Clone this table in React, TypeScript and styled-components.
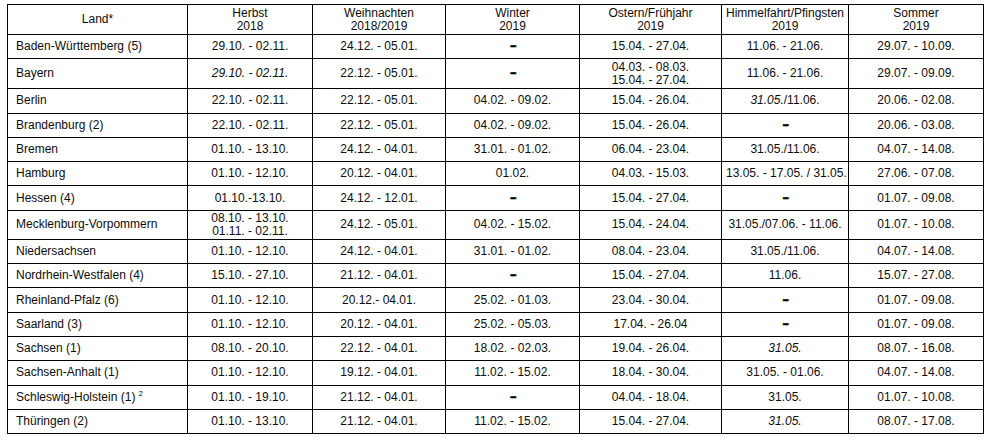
import React from 'react'
import styled, { createGlobalStyle } from 'styled-components'

const GlobalStyle = createGlobalStyle`
	html, body {
		margin: 0;
		padding: 0;
		background: #ffffff;
	}
	body {
		font-family: "Liberation Sans", Arial, sans-serif;
		color: #0c0c0c;
	}
`

const Page = styled.div`
	padding: 4px 6px 8px 7px;
	width: 989px;
	box-sizing: border-box;
`

const Table = styled.table`
	width: 976px;
	table-layout: fixed;
	border-collapse: collapse;
	font-size: 12px;
	line-height: 13px;
`

const Row = styled.tr<{ $tall?: number }>`
	height: ${p => p.$tall ? `${p.$tall}px` : '24.3px'};
`

const HeadCell = styled.th`
	border: 1px solid #000;
	font-weight: normal;
	text-align: center;
	vertical-align: middle;
	padding: 0 4px;
	white-space: nowrap;
`

const LandCell = styled.td`
	border: 1px solid #000;
	text-align: left;
	padding: 0 8px;
	vertical-align: middle;
	white-space: nowrap;
`

const Cell = styled.td`
	border: 1px solid #000;
	text-align: center;
	padding: 0 4px;
	vertical-align: middle;
	white-space: nowrap;
`

const I = styled.i`
	font-style: italic;
`

const Dash = styled.b`
	font-weight: bold;
	letter-spacing: -1.5px;
	font-size: 12px;
	-webkit-text-stroke: 0.4px #000;
`

const Sup = styled.sup`
	font-size: 8px;
	vertical-align: 5px;
	line-height: 0;
	margin-left: 3px;
`

const widths = [180, 125, 133, 134, 142, 127, 135]

const headers: [string, string][] = [
	['Herbst', '2018'],
	['Weihnachten', '2018/2019'],
	['Winter', '2019'],
	['Ostern/Frühjahr', '2019'],
	['Himmelfahrt/Pfingsten', '2019'],
	['Sommer', '2019'],
]

const none = <Dash>--</Dash>
const two = (a: string, b: string) => <>{a}<br />{b}</>

type Land = { land: React.ReactNode; tall?: number; cells: React.ReactNode[] }

const rows: Land[] = [
	{ land: 'Baden-Württemberg (5)', cells: ['29.10. - 02.11.', '24.12. - 05.01.', none, '15.04. - 27.04.', '11.06. - 21.06.', '29.07. - 10.09.'] },
	{ land: 'Bayern', tall: 30, cells: [<I>29.10. - 02.11.</I>, '22.12. - 05.01.', none, two('04.03. - 08.03.', '15.04. - 27.04.'), '11.06. - 21.06.', '29.07. - 09.09.'] },
	{ land: 'Berlin', cells: ['22.10. - 02.11.', '22.12. - 05.01.', '04.02. - 09.02.', '15.04. - 26.04.', <><I>31.05.</I>/11.06.</>, '20.06. - 02.08.'] },
	{ land: 'Brandenburg (2)', cells: ['22.10. - 02.11.', '22.12. - 05.01.', '04.02. - 09.02.', '15.04. - 26.04.', none, '20.06. - 03.08.'] },
	{ land: 'Bremen', cells: ['01.10. - 13.10.', '24.12. - 04.01.', '31.01. - 01.02.', '06.04. - 23.04.', '31.05./11.06.', '04.07. - 14.08.'] },
	{ land: 'Hamburg', cells: ['01.10. - 12.10.', '20.12. - 04.01.', '01.02.', '04.03. - 15.03.', '13.05. - 17.05. / 31.05.', '27.06. - 07.08.'] },
	{ land: 'Hessen (4)', cells: ['01.10.-13.10.', '24.12. - 12.01.', none, '15.04. - 27.04.', none, '01.07. - 09.08.'] },
	{ land: 'Mecklenburg-Vorpommern', tall: 29, cells: [two('08.10. - 13.10.', '01.11. - 02.11.'), '24.12. - 05.01.', '04.02. - 15.02.', '15.04. - 24.04.', '31.05./07.06. - 11.06.', '01.07. - 10.08.'] },
	{ land: 'Niedersachsen', cells: ['01.10. - 12.10.', '24.12. - 04.01.', '31.01. - 01.02.', '08.04. - 23.04.', '31.05./11.06.', '04.07. - 14.08.'] },
	{ land: 'Nordrhein-Westfalen (4)', cells: ['15.10. - 27.10.', '21.12. - 04.01.', none, '15.04. - 27.04.', '11.06.', '15.07. - 27.08.'] },
	{ land: 'Rheinland-Pfalz (6)', cells: ['01.10. - 12.10.', '20.12.- 04.01.', '25.02. - 01.03.', '23.04. - 30.04.', none, '01.07. - 09.08.'] },
	{ land: 'Saarland (3)', cells: ['01.10. - 12.10.', '20.12. - 04.01.', '25.02. - 05.03.', '17.04. - 26.04', none, '01.07. - 09.08.'] },
	{ land: 'Sachsen (1)', cells: ['08.10. - 20.10.', '22.12. - 04.01.', '18.02. - 02.03.', '19.04. - 26.04.', <I>31.05.</I>, '08.07. - 16.08.'] },
	{ land: 'Sachsen-Anhalt (1)', cells: ['01.10. - 12.10.', '19.12. - 04.01.', '11.02. - 15.02.', '18.04. - 30.04.', '31.05. - 01.06.', '04.07. - 14.08.'] },
	{ land: <>Schleswig-Holstein (1)<Sup>2</Sup></>, cells: ['01.10. - 19.10.', '21.12. - 04.01.', none, '04.04. - 18.04.', '31.05.', '01.07. - 10.08.'] },
	{ land: 'Thüringen (2)', cells: ['01.10. - 13.10.', '21.12. - 04.01.', '11.02. - 15.02.', '15.04. - 27.04.', <I>31.05.</I>, '08.07. - 17.08.'] },
]

const HolidayTable = () => (
	<Table>
		<colgroup>
			{widths.map((w, i) => <col key={i} style={{ width: w }} />)}
		</colgroup>
		<thead>
			<Row $tall={30}>
				<HeadCell>Land*</HeadCell>
				{headers.map(([a, b]) => (
					<HeadCell key={a}>{a}<br />{b}</HeadCell>
				))}
			</Row>
		</thead>
		<tbody>
			{rows.map((r, i) => (
				<Row key={i} $tall={r.tall}>
					<LandCell>{r.land}</LandCell>
					{r.cells.map((c, j) => <Cell key={j}>{c}</Cell>)}
				</Row>
			))}
		</tbody>
	</Table>
)

export default function App() {
	return (
		<Page>
			<GlobalStyle />
			<HolidayTable />
		</Page>
	)
}
